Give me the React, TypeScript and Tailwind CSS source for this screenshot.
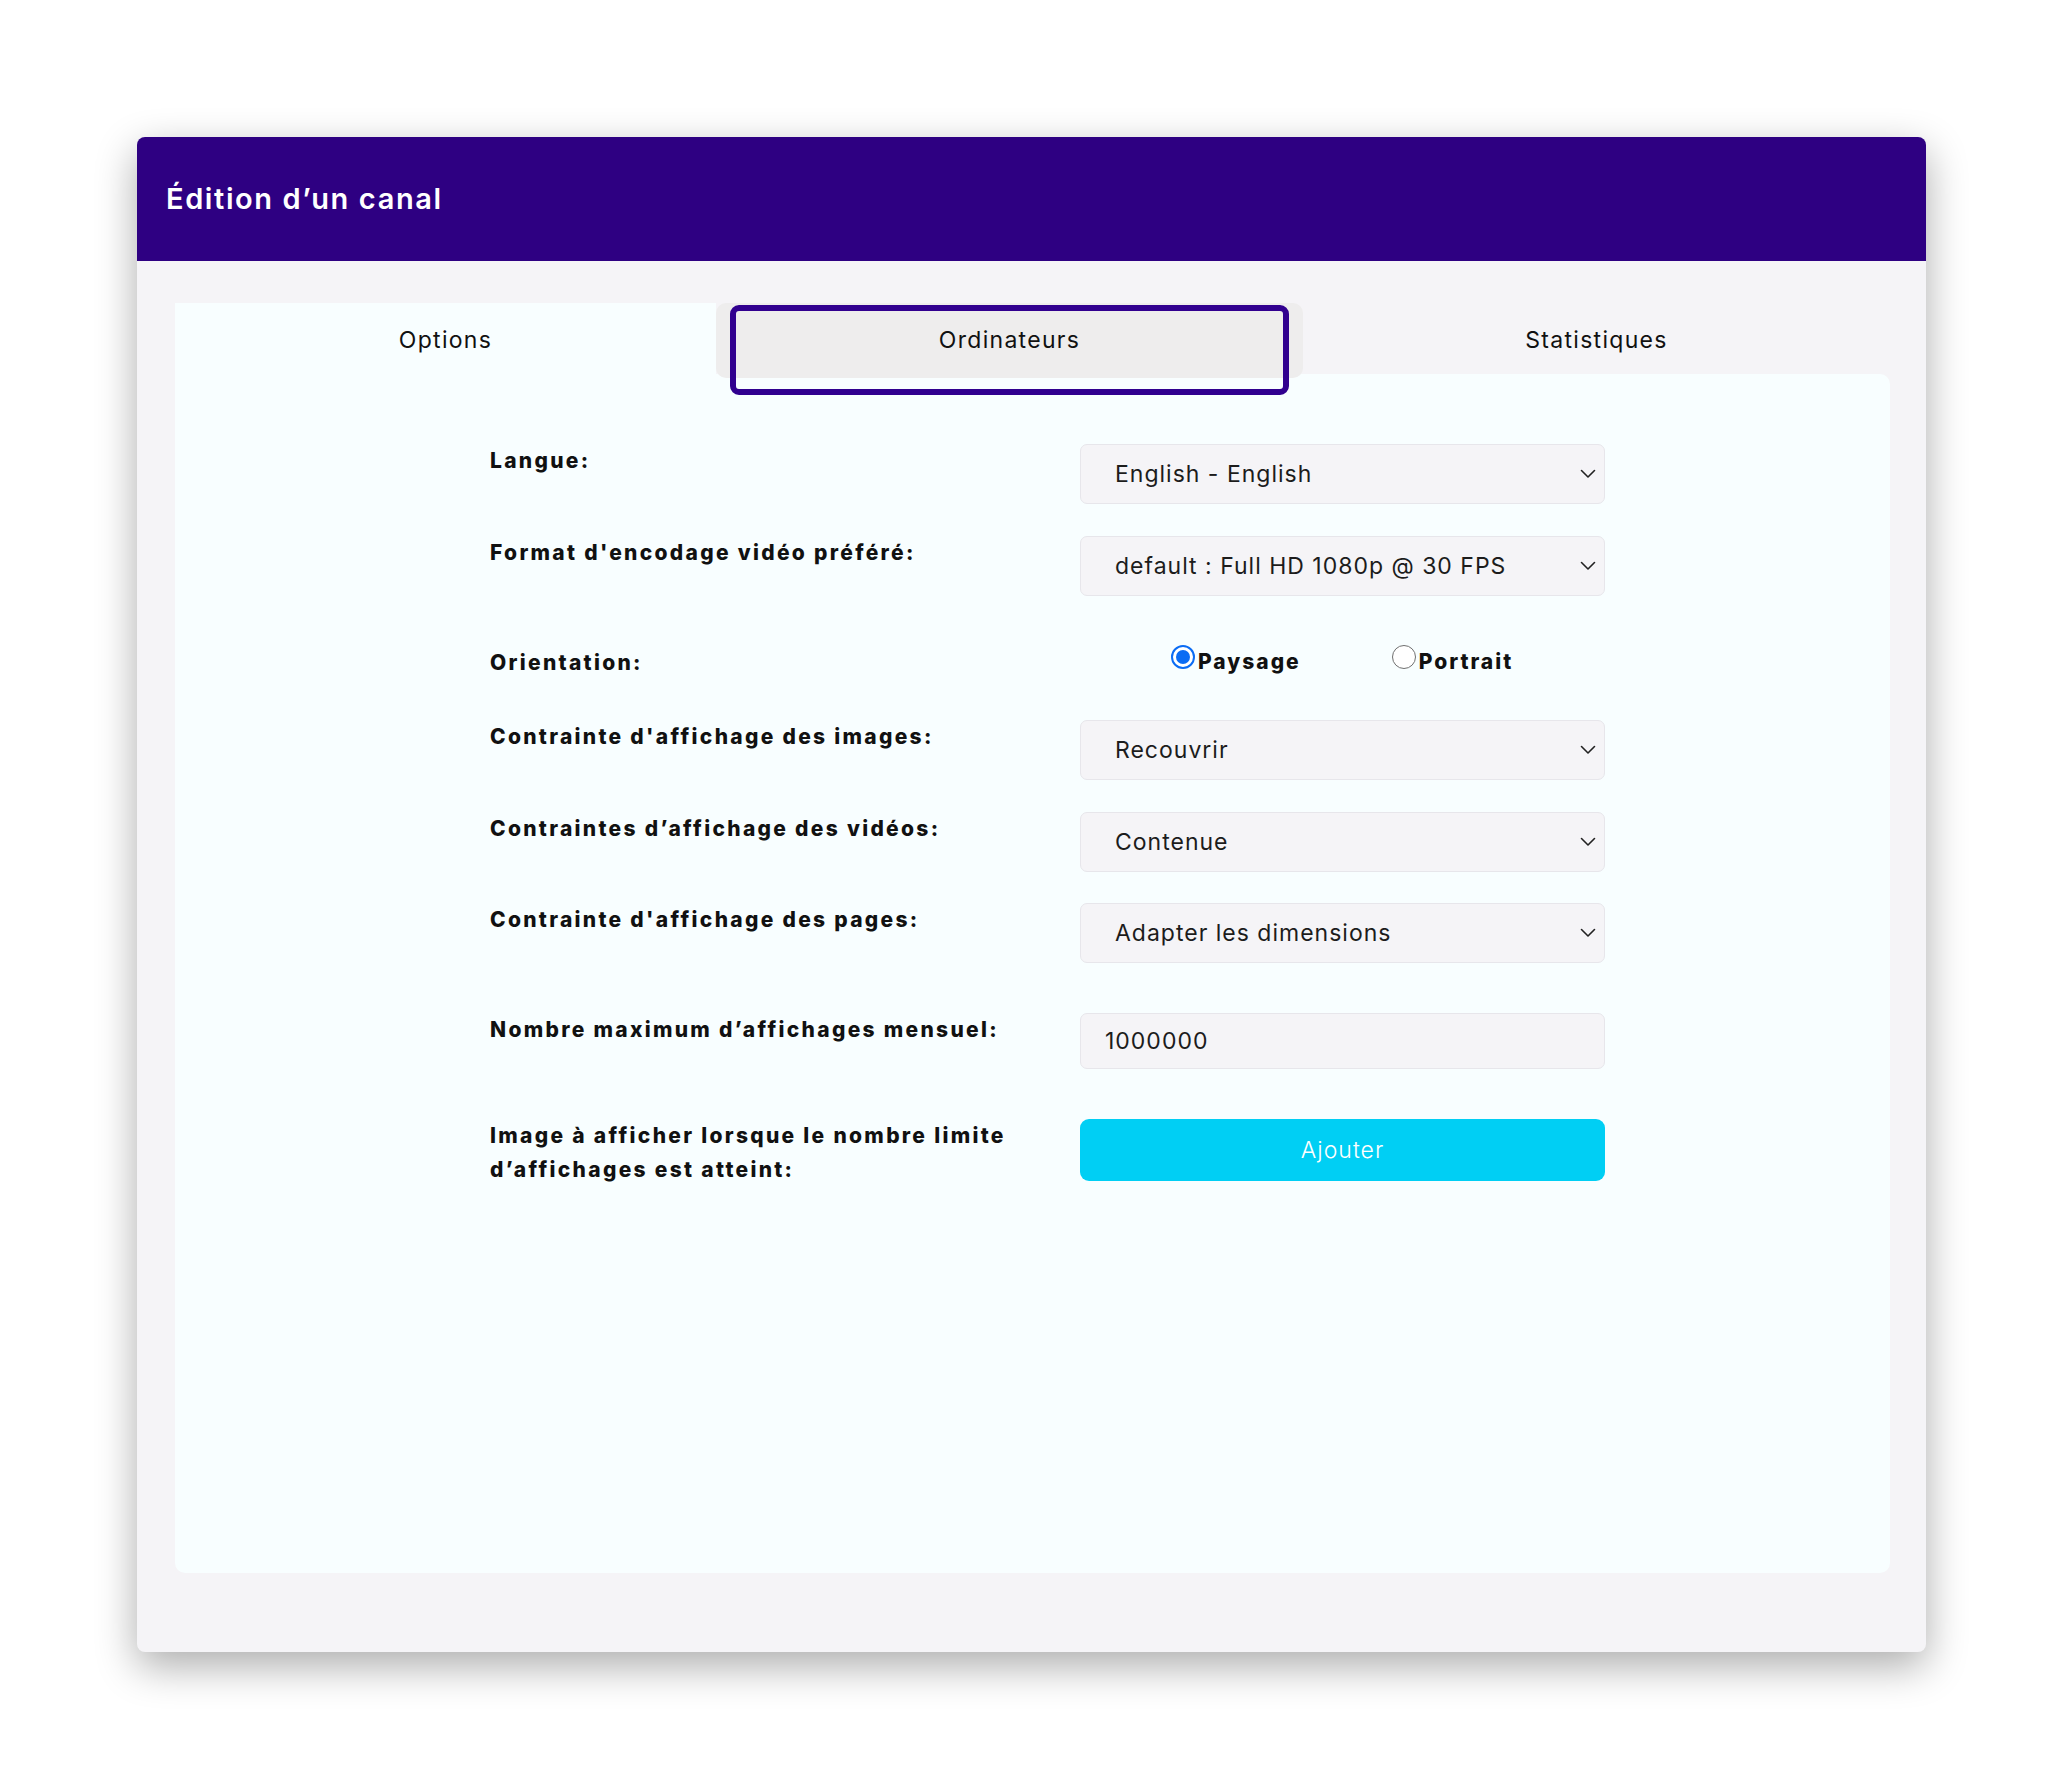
import React from "react";

const FONT = { fontFamily: "Inter, 'Noto Sans', sans-serif" };

const Chevron: React.FC = () => (
  <svg width="16" height="10" viewBox="0 0 16 10" fill="none">
    <path d="M1.5 1.5 L8 8 L14.5 1.5" stroke="#222" strokeWidth="1.6" strokeLinecap="round" strokeLinejoin="round" />
  </svg>
);

const Select: React.FC<{ value: string }> = ({ value }) => (
  <div className="w-[525px] h-[60px] rounded-[7px] border border-[#e7e6eb] bg-[#f5f4f7] flex items-center justify-between pl-[34px] pr-[8px] text-[23px] tracking-[1px] text-[#1c1c1c]">
    <span className="pt-[1px]">{value}</span>
    <Chevron />
  </div>
);

const Label: React.FC<{ children: React.ReactNode }> = ({ children }) => (
  <div className="w-[550px] mr-[40px] text-[21px] leading-[34px] tracking-[2.3px] font-extrabold text-[#111]">{children}</div>
);

const Radio: React.FC<{ label: string; checked?: boolean }> = ({ label, checked }) => (
  <div className="flex items-start">
    {checked ? (
      <div className="w-[24px] h-[24px] rounded-full border-2 border-[#0b6cf4] bg-white flex items-center justify-center">
        <div className="w-[14px] h-[14px] rounded-full bg-[#0b6cf4]" />
      </div>
    ) : (
      <div className="w-[24px] h-[24px] rounded-full border-[1.5px] border-[#6f6f6f] bg-white" />
    )}
    <span className="ml-[3px] text-[21px] leading-[34px] tracking-[2px] font-extrabold text-[#111]">{label}</span>
  </div>
);

export default function App() {
  return (
    <div className="min-h-screen bg-white pt-[137px] pl-[137px]" style={FONT}>
      <div className="w-[1789px] h-[1515px] rounded-[8px] bg-[#f5f4f7] shadow-[0_14px_42px_rgba(0,0,0,0.33)] overflow-hidden">
        {/* header */}
        <div className="h-[124px] bg-[#2e0082] flex items-center pl-[29px]">
          <h1 className="text-white text-[29px] tracking-[1.6px] font-semibold">Édition d’un canal</h1>
        </div>

        <div className="pl-[38px] pr-[36px] pt-[42px]">
          {/* tabs */}
          <div className="flex h-[71px] items-start text-[23px] tracking-[1.3px] text-[#111]">
            <div className="w-[541px] h-[71px] bg-[#f8feff] flex items-center justify-center pt-[4px]">
              Options
            </div>
            <div className="relative z-10 w-[587px] h-[75px] rounded-[10px] bg-[#eeeded] flex items-center justify-center">
              Ordinateurs
              <div className="absolute left-[14px] right-[14px] top-[2px] -bottom-[17px] rounded-[9px] border-[6px] border-[#31008f]" />
            </div>
            <div className="flex-1 h-[71px] flex items-center justify-center pt-[4px]">
              Statistiques
            </div>
          </div>

          {/* panel */}
          <div className="h-[1199px] bg-[#f8feff] rounded-[10px] rounded-tl-none pl-[315px] pt-[70px]">
            <div className="flex items-start">
              <Label>Langue:</Label>
              <Select value="English - English" />
            </div>
            <div className="flex items-start mt-[32px]">
              <Label>Format d'encodage vidéo préféré:</Label>
              <Select value="default : Full HD 1080p @ 30 FPS" />
            </div>
            <div className="flex items-start mt-[50px]">
              <Label>Orientation:</Label>
              <div className="w-[525px] flex pl-[91px] gap-[91px] -mt-[1px]">
                <Radio label="Paysage" checked />
                <Radio label="Portrait" />
              </div>
            </div>
            <div className="flex items-start mt-[40px]">
              <Label>Contrainte d'affichage des images:</Label>
              <Select value="Recouvrir" />
            </div>
            <div className="flex items-start mt-[32px]">
              <Label>Contraintes d’affichage des vidéos:</Label>
              <Select value="Contenue" />
            </div>
            <div className="flex items-start mt-[31px]">
              <Label>Contrainte d'affichage des pages:</Label>
              <Select value="Adapter les dimensions" />
            </div>
            <div className="flex items-start mt-[50px]">
              <Label>Nombre maximum d’affichages mensuel:</Label>
              <div className="w-[525px] h-[56px] rounded-[7px] border border-[#e7e6eb] bg-[#f5f4f7] flex items-center pl-[24px] text-[23px] tracking-[1px] text-[#1c1c1c]">
                1000000
              </div>
            </div>
            <div className="flex items-start mt-[50px]">
              <Label>Image à afficher lorsque le nombre limite d’affichages est atteint:</Label>
              <button className="w-[525px] h-[62px] rounded-[9px] bg-[#00cff4] text-white text-[23px] tracking-[1px] font-light">
                Ajouter
              </button>
            </div>
          </div>
        </div>
      </div>
    </div>
  );
}
